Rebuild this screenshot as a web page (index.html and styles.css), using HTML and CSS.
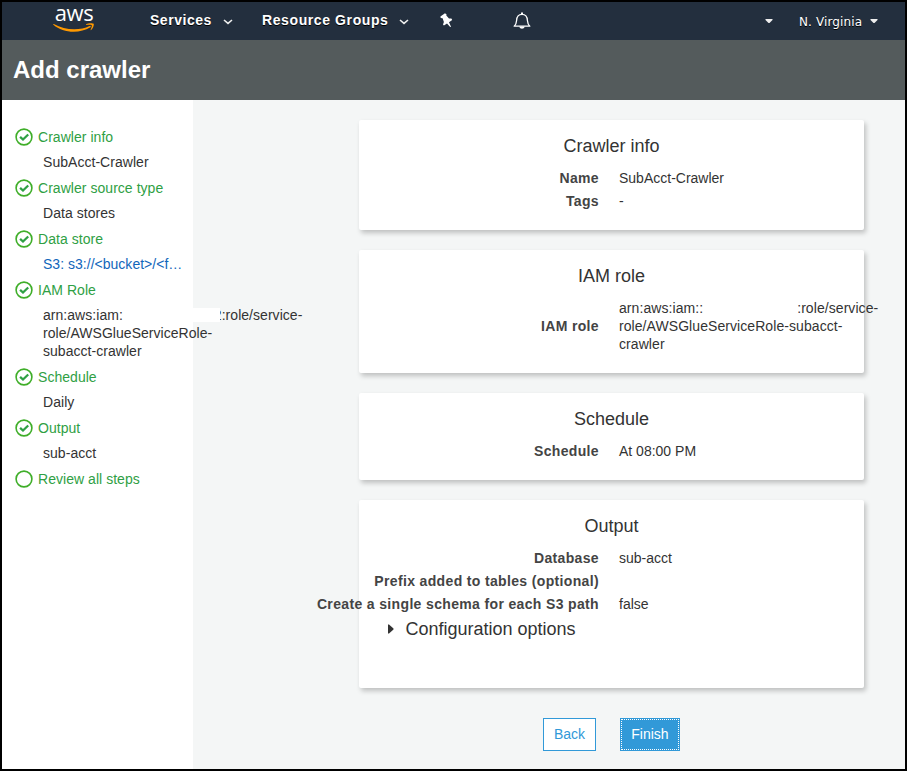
FILE: index.html
```html
<!DOCTYPE html>
<html lang="en">
<head>
<meta charset="utf-8">
<title>Add crawler</title>
<link rel="stylesheet" href="styles.css">
</head>
<body>
<svg class="defs" width="0" height="0" aria-hidden="true">
  <symbol id="done" viewBox="0 0 18 18"><circle cx="9" cy="9" r="7.9" fill="none" stroke="#3fae29" stroke-width="1.6"/><path d="M5.1 8.8 8 11.5 13.2 6.5" fill="none" stroke="#2fa044" stroke-width="2.3"/></symbol>
  <symbol id="open" viewBox="0 0 18 18"><circle cx="9" cy="9" r="7.9" fill="none" stroke="#3fae29" stroke-width="1.6"/></symbol>
  <symbol id="chevron" viewBox="0 0 10 6"><path d="M1 1 5 4.4 9 1" fill="none" stroke="#eee" stroke-width="1.6"/></symbol>
  <symbol id="caret" viewBox="0 0 8 5"><path d="M.5 0H7.500V1L4.5 4H3.5L.5 1Z" fill="#eee"/></symbol>
</svg>
<div class="frame">
  <header class="nav">
    <div class="logo">
      <span class="logo-text">aws</span>
      <svg class="smile" width="42" height="10" viewBox="0 0 42 11" preserveAspectRatio="none"><path d="M.8 1.1C12 8.2 27 8.4 36.5 3.3c1.200-.5 1.900.6.9 1.400C26.500 12 10 11.200.4 1.900 0 1.300.2.8.8 1.100Z" fill="#f90"/><path d="M33.400 1.200C35.300-.1 40 .1 40.600.8c.6.8-.2 5-2.500 7-.4.3-.7.1-.5-.3.5-1.300 1.700-4.300 1.100-5.100-.6-.7-3.700-.4-5.100-.2-.5 0-.6-.5-.2-1Z" fill="#f90"/></svg>
    </div>
    <span class="menu">Services</span><svg class="chev" width="10" height="6"><use href="#chevron"/></svg>
    <span class="menu groups">Resource Groups</span><svg class="chev" width="10" height="6"><use href="#chevron"/></svg>
    <svg class="pin" width="13" height="15" viewBox="0 0 13 15"><path d="M.4 3.500 5 .2 6.600 1.400 6.300 2.600 9 5.400 11.400 5.500 12.200 7 9 9.300 11 13.800 10.200 14 7 10.500 3.900 12.600 3 11.400 3.900 9.100 2.600 5.200.7 5Z" fill="#fff"/></svg>
    <svg class="bell" width="18" height="18" viewBox="0 0 18 18"><path d="M1.200 14.200C3 12.500 3.400 11.500 3.600 8.500 3.800 4.700 5.600 2.400 9 2.400s5.200 2.300 5.400 6.100c.2 3 .6 4 2.400 5.700Z" fill="none" stroke="#fff" stroke-width="1.300" stroke-linejoin="round"/><path d="M8 .5h2v2H8ZM6.300 14.500h5.400c-.5 3-4.900 3-5.400 0Z" fill="#fff"/></svg>
    <svg class="account" width="8" height="5"><use href="#caret"/></svg>
    <span class="region">N. Virginia</span>
    <svg class="region-caret" width="8" height="5"><use href="#caret"/></svg>
  </header>
  <div class="title-bar"><h1>Add crawler</h1></div>
  <div class="body">
    <aside class="steps">
      <div class="step"><svg width="18" height="18"><use href="#done"/></svg>Crawler info</div>
      <div class="detail">SubAcct-Crawler</div>
      <div class="step"><svg width="18" height="18"><use href="#done"/></svg>Crawler source type</div>
      <div class="detail">Data stores</div>
      <div class="step"><svg width="18" height="18"><use href="#done"/></svg>Data store</div>
      <div class="detail link">S3: s3://&lt;bucket&gt;/&lt;f…</div>
      <div class="step"><svg width="18" height="18"><use href="#done"/></svg>IAM Role</div>
      <div class="detail arn">arn:aws:iam:<span class="patch"></span>2:role/service-<br>role/AWSGlueServiceRole-<br>subacct-crawler</div>
      <div class="step"><svg width="18" height="18"><use href="#done"/></svg>Schedule</div>
      <div class="detail">Daily</div>
      <div class="step"><svg width="18" height="18"><use href="#done"/></svg>Output</div>
      <div class="detail">sub-acct</div>
      <div class="step"><svg width="18" height="18"><use href="#open"/></svg>Review all steps</div>
    </aside>
    <main class="review">
      <section class="card">
        <h2>Crawler info</h2>
        <div class="row"><span class="label">Name</span><span>SubAcct-Crawler</span></div>
        <div class="row"><span class="label">Tags</span><span>-</span></div>
      </section>
      <section class="card">
        <h2>IAM role</h2>
        <div class="row"><span class="label">IAM role</span><span class="value-arn">arn:aws:iam::<span class="gap"></span>:role/service-<br>role/AWSGlueServiceRole-subacct-<br>crawler</span></div>
      </section>
      <section class="card">
        <h2>Schedule</h2>
        <div class="row"><span class="label">Schedule</span><span>At 08:00 PM</span></div>
      </section>
      <section class="card output">
        <h2>Output</h2>
        <div class="row"><span class="label">Database</span><span>sub-acct</span></div>
        <div class="row"><span class="label">Prefix added to tables (optional)</span><span></span></div>
        <div class="row"><span class="label">Create a single schema for each S3 path</span><span>false</span></div>
        <div class="config"><svg width="6" height="10" viewBox="0 0 6 10"><path d="M0 .5H1L5.500 4.500V5.500L1 9.500H0Z" fill="#333"/></svg>Configuration options</div>
      </section>
      <div class="actions"><button class="back">Back</button><button class="finish">Finish</button></div>
    </main>
  </div>
</div>
</body>
</html>
```
FILE: styles.css
```css
* { box-sizing: border-box; }
body { margin: 0; font: 14px/18px "Liberation Sans", Arial, sans-serif; color: #333; }
svg { display: block; flex: none; }
.defs { position: absolute; }
.frame { height: 771px; border: 2px solid #000; display: flex; flex-direction: column; overflow: hidden; }

.nav { height: 38px; flex: none; background: #232f3e; color: #fff; display: flex; align-items: center; padding-left: 51px; }
.logo { width: 42px; height: 33px; margin-right: 55px; flex: none; }
.logo-text { display: block; height: 18px; font: 500 22px/15px "Open Sans", sans-serif; letter-spacing: -.4px; text-align: center; }
.menu { font-weight: bold; letter-spacing: .53px; white-space: nowrap; text-shadow: 0 1px 0 #000; margin-top: -2px; width: 63px; }
.groups { width: 127px; margin-left: 29px; letter-spacing: .6px; }
.chev { margin-left: 10px; margin-top: 1px; }
.pin { margin-left: 31px; margin-top: -2px; }
.bell { margin-left: 60px; }
.account { margin-left: 234px; }
.region { font: 12px/16px "DejaVu Sans", sans-serif; letter-spacing: .12px; text-shadow: 0 1px 0 #000; margin-left: 26px; margin-top: 1px; width: 64px; white-space: nowrap; }
.region-caret { margin-left: 7px; }

.title-bar { height: 60px; flex: none; background: #545b5c; color: #fff; padding: 16px 11px; }
h1 { margin: 0; font-size: 24px; line-height: 28px; }

.body { flex: 1; display: flex; min-height: 0; background: #f4f6f6; }
.steps { width: 191px; flex: none; background: #fff; padding: 24px 0 0 13px; white-space: nowrap; letter-spacing: .04px; }
.step { height: 26px; display: flex; align-items: center; gap: 5px; color: #2fa044; }
.detail { margin: 3px 0 4px 28px; }
.link { color: #1166bb; letter-spacing: .02px; }
.arn { position: relative; z-index: 1; }
.patch { position: relative; display: inline-block; width: 97px; height: 14px; margin-right: -6px; background: #fff; vertical-align: -2px; }

.review { padding: 20px 0 0 166px; white-space: nowrap; }
.card { width: 505px; padding: 13px 0 17px; margin-bottom: 20px; background: #fff; border-radius: 2px; box-shadow: 2px 3px 5px rgba(0,0,0,.22); }
h2 { margin: 0 0 7px; font-size: 18px; line-height: 27px; font-weight: normal; text-align: center; }
.row { display: grid; grid-template-columns: 240px 1fr; column-gap: 20px; align-items: center; min-height: 23px; padding: 2px 0 3px; }
.label { justify-self: end; font-weight: bold; color: #444; letter-spacing: .35px; }
.value-arn { letter-spacing: .07px; }
.gap { display: inline-block; width: 94px; }
.output { padding-bottom: 45px; }
.config { height: 28px; margin-top: -1px; display: flex; align-items: center; gap: 11.500px; padding-left: 29px; font-size: 18px; }
.actions { display: flex; gap: 24px; padding: 10px 0 0 184px; }
button { height: 33px; padding: 0 0 2px; font: 14px/18px "Liberation Sans", Arial, sans-serif; border: 1px solid #3199d8; }
.back { width: 53px; background: #fff; color: #3199d8; }
.finish { width: 60px; background: #3199d8; color: #fff; outline: 1px dotted #fff; outline-offset: -2px; }
```
